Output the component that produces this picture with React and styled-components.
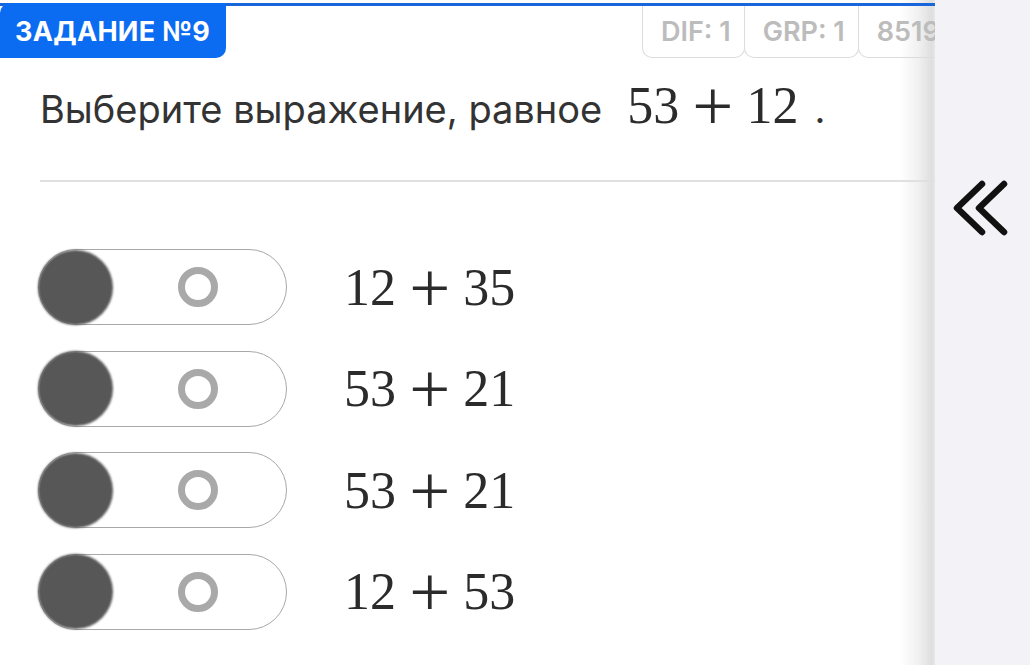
import React from 'react';
import styled, { createGlobalStyle } from 'styled-components';

const GlobalStyle = createGlobalStyle`
  html, body {
    margin: 0;
    padding: 0;
    height: 100%;
    overflow: hidden;
    background: #f2f2f7;
  }
  #root {
    height: 100%;
  }
`;

const options = ['12 + 35', '53 + 21', '53 + 21', '12 + 53'];
const tags = ['DIF: 1', 'GRP: 1', '85196'];

const Expr = ({ value }) => {
  const [a, b] = value.split(' + ');
  return (
    <Formula>
      {a}
      <Plus>+</Plus>
      {b}
    </Formula>
  );
};

const App = () => (
  <Page>
    <GlobalStyle />
    <Sheet>
      <Header>
        <Badge>ЗАДАНИЕ №9</Badge>
        <Tags>
          {tags.map((t) => (
            <Tag key={t}>{t}</Tag>
          ))}
        </Tags>
      </Header>
      <Question>
        Выберите выражение, равное
        <QuestionFormula>
          <Expr value="53 + 12" />
        </QuestionFormula>
        <Dot>.</Dot>
      </Question>
      <Divider />
      <Options>
        {options.map((o, i) => (
          <Option key={i}>
            <Toggle>
              <Knob />
              <Ring />
            </Toggle>
            <Expr value={o} />
          </Option>
        ))}
      </Options>
    </Sheet>
    <Side>
      <Collapse viewBox="0 0 60 56" width="60" height="56">
        <path
          d="M29 4 L4 28 L29 52 M51 4 L26 28 L51 52"
          fill="none"
          stroke="#111"
          strokeWidth="6.5"
          strokeLinecap="round"
          strokeLinejoin="round"
        />
      </Collapse>
    </Side>
  </Page>
);

export default App;

const Page = styled.div`
  display: flex;
  height: 100%;
  font-family: Inter, 'Noto Sans', sans-serif;
`;

const Sheet = styled.div`
  width: 935px;
  flex-shrink: 0;
  padding-top: 3px;
  box-sizing: border-box;
  background: linear-gradient(
    to right,
    #fff 0,
    #fff 900px,
    #f1f1f1 918px,
    #dedede 932px,
    #e8e8e8 935px
  );
  display: flex;
  flex-direction: column;
  overflow: hidden;
`;

const Header = styled.div`
  display: flex;
  justify-content: space-between;
  border-top: 3px solid #1766da;
  height: 52px;
`;

const Badge = styled.div`
  background: #0b6cf2;
  color: #fff;
  font-weight: 700;
  font-size: 27px;
  letter-spacing: 0.3px;
  display: flex;
  align-items: center;
  padding: 2px 0 0 15px;
  width: 226px;
  box-sizing: border-box;
  margin-top: -3px;
  border-radius: 10px 0 10px 0;
`;

const Tags = styled.div`
  display: flex;
  width: 293px;
  overflow: hidden;
  flex-shrink: 0;
`;

const Tag = styled.div`
  flex-shrink: 0;
  border: 1px solid #dcdcdc;
  border-top: none;
  border-radius: 0 0 10px 10px;
  color: #bcbcbc;
  font-weight: 600;
  font-size: 27px;
  display: flex;
  align-items: center;
  padding: 0 13px 0 18px;
  margin-right: -1px;
`;

const Question = styled.div`
  display: flex;
  align-items: baseline;
  padding: 18px 0 0 40px;
  font-size: 38px;
  color: #333;
  height: 122px;
  box-sizing: border-box;
`;

const Formula = styled.span`
  font-family: 'Liberation Serif', 'DejaVu Serif', serif;
  font-size: 52px;
  color: #2b2b2b;
  white-space: nowrap;
`;

const Plus = styled.span`
  display: inline-block;
  margin: 0 19px;
  transform: scale(1.4);
`;

const QuestionFormula = styled.span`
  margin-left: 25px;
`;

const Dot = styled.span`
  margin-left: 16px;
`;

const Divider = styled.div`
  height: 2px;
  background: #e0e0e0;
  margin-left: 40px;
`;

const Options = styled.div`
  display: flex;
  flex-direction: column;
  gap: 25.5px;
  padding: 67px 0 0 38px;
`;

const Option = styled.div`
  display: flex;
  align-items: center;
  gap: 57px;
`;

const Toggle = styled.div`
  width: 249px;
  height: 76px;
  box-sizing: border-box;
  border: 1px solid #a8a8a8;
  border-radius: 38px;
  display: flex;
  align-items: center;
  background: #fff;
`;

const Knob = styled.div`
  width: 75px;
  height: 75px;
  border-radius: 50%;
  background: #575757;
  filter: blur(0.8px);
  margin-left: -1px;
`;

const Ring = styled.div`
  width: 40px;
  height: 40px;
  box-sizing: border-box;
  border: 7px solid #a9a9a9;
  border-radius: 50%;
  margin-left: 65px;
`;

const Side = styled.div`
  flex: 1;
  background: #f2f2f7;
  padding: 180px 0 0 18px;
`;

const Collapse = styled.svg`
  display: block;
`;
